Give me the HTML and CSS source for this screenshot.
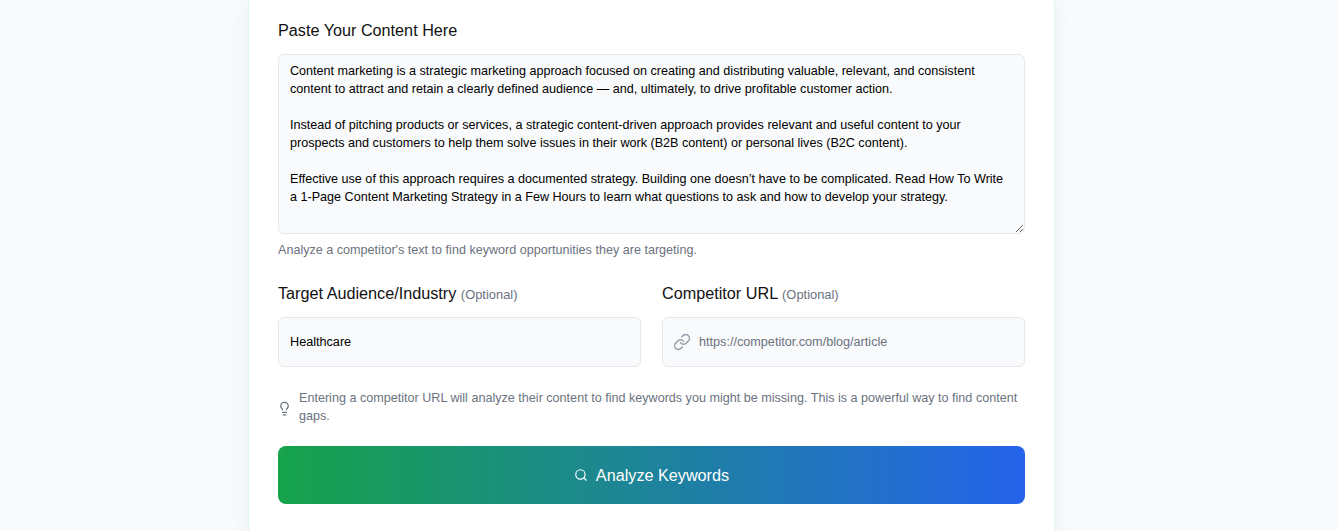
FILE: index.html
```html
<!DOCTYPE html>
<html lang="en">
  <head>
    <meta charset="UTF-8" />
    <meta name="viewport" content="width=device-width, initial-scale=1.0" />
    <title>Keyword Analyzer</title>
    <link rel="stylesheet" href="styles.css">
  </head>
  <body>
    <main class="card">
      <div class="field">
        <label class="label" for="content">Paste Your Content Here</label>
        <textarea id="content" class="textarea">Content marketing is a strategic marketing approach focused on creating and distributing valuable, relevant, and consistent content to attract and retain a clearly defined audience — and, ultimately, to drive profitable customer action.

Instead of pitching products or services, a strategic content-driven approach provides relevant and useful content to your prospects and customers to help them solve issues in their work (B2B content) or personal lives (B2C content).

Effective use of this approach requires a documented strategy. Building one doesn’t have to be complicated. Read How To Write a 1-Page Content Marketing Strategy in a Few Hours to learn what questions to ask and how to develop your strategy.</textarea>
        <p class="hint">Analyze a competitor's text to find keyword opportunities they are targeting.</p>
      </div>

      <div class="columns">
        <div>
          <label class="label" for="audience">Target Audience/Industry <span class="optional">(Optional)</span></label>
          <input id="audience" class="input" type="text" value="Healthcare" />
        </div>
        <div>
          <label class="label" for="url">Competitor URL <span class="optional">(Optional)</span></label>
          <div class="input-wrap">
            <!-- link icon -->
            <svg class="link-icon" viewBox="0 0 24 24" fill="none" stroke="currentColor" stroke-width="2" stroke-linecap="round" stroke-linejoin="round">
              <path d="M10 13a5 5 0 0 0 7.54.54l3-3a5 5 0 0 0-7.07-7.07l-1.72 1.71" />
              <path d="M14 11a5 5 0 0 0-7.54-.54l-3 3a5 5 0 0 0 7.07 7.07l1.71-1.71" />
            </svg>
            <input id="url" class="input with-icon" type="text" placeholder="https://competitor.com/blog/article" />
          </div>
        </div>
      </div>

      <div class="tip">
        <svg class="tip-icon" viewBox="0 0 24 24" fill="none" stroke="currentColor" stroke-width="2" stroke-linecap="round" stroke-linejoin="round">
          <path d="M15 14c.2-1 .7-1.7 1.5-2.5 1-.9 1.5-2.2 1.5-3.5A6 6 0 0 0 6 8c0 1 .2 2.2 1.5 3.5.7.7 1.3 1.5 1.5 2.5" />
          <path d="M9 18h6" />
          <path d="M10 22h4" />
        </svg>
        <p>Entering a competitor URL will analyze their content to find keywords you might be missing. This is a powerful way to find content gaps.</p>
      </div>

      <button class="btn" type="button">
        <svg class="btn-icon" viewBox="0 0 24 24" fill="none" stroke="currentColor" stroke-width="2" stroke-linecap="round" stroke-linejoin="round">
          <circle cx="11" cy="11" r="8" />
          <path d="m21 21-4.3-4.3" />
        </svg>
        Analyze Keywords
      </button>
    </main>
  </body>
</html>
```

FILE: styles.css
```css
:root {
  --border: #e5e7eb;
  --field: #f9fafb;
  --muted: #6b7280;
  --font: "Liberation Sans", Arial, sans-serif;
}

* {
  box-sizing: border-box;
}

html,
body {
  height: 100%;
  margin: 0;
  overflow: hidden;
  font-family: var(--font);
}

body {
  display: flex;
  justify-content: center;
  padding-right: 34px;
  background: #f8fafc;
}

.card {
  flex: none;
  width: 807px;
  height: 538px;
  padding: 21px 29px 0;
  background: #fff;
  border: 1px solid #dcfce7;
  border-top: none;
  border-radius: 0 0 12px 12px;
  box-shadow: 0 4px 20px rgba(0, 0, 0, 0.06);
}

.label {
  display: block;
  font-size: 16.22px;
  line-height: 18px;
  color: #111;
}

.optional {
  font-size: 12.9px;
  color: var(--muted);
}

.textarea {
  display: block;
  width: 100%;
  height: 180px;
  margin-top: 15px;
  padding: 7px 11px;
  font-family: var(--font);
  font-size: 12.6px;
  line-height: 18px;
  color: #000;
  background: var(--field);
  border: 1px solid var(--border);
  border-radius: 6px;
  resize: vertical;
}

.hint {
  margin: 8px 0 0;
  font-size: 12.6px;
  line-height: 16px;
  color: var(--muted);
}

.columns {
  display: grid;
  grid-template-columns: 1fr 1fr;
  gap: 21px;
  margin-top: 26px;
}

.columns .input,
.columns .input-wrap {
  margin-top: 13px;
}

.input {
  display: block;
  width: 100%;
  height: 50px;
  padding: 0 11px;
  font-family: var(--font);
  font-size: 12.65px;
  color: #000;
  background: var(--field);
  border: 1px solid var(--border);
  border-radius: 6px;
}

.input::placeholder {
  color: var(--muted);
  opacity: 1;
}

.input-wrap {
  position: relative;
}

.input-wrap .input {
  margin-top: 0;
}

.input.with-icon {
  padding-left: 36px;
}

.link-icon {
  position: absolute;
  left: 11px;
  top: 16px;
  width: 18px;
  height: 18px;
  color: #9ca3af;
}

.tip {
  display: flex;
  align-items: center;
  gap: 6px;
  margin-top: 22px;
  color: var(--muted);
}

.tip p {
  margin: 0;
  font-size: 12.6px;
  line-height: 18px;
}

.tip-icon {
  flex: none;
  width: 15px;
  height: 15px;
  margin: 3px 1px 0 -1px;
}

.btn {
  display: flex;
  align-items: center;
  justify-content: center;
  gap: 8px;
  width: 100%;
  height: 58px;
  margin-top: 21px;
  font-family: var(--font);
  font-size: 16.22px;
  color: #fff;
  background: linear-gradient(90deg, #16a34a, #2563eb);
  border: none;
  border-radius: 8px;
}

.btn-icon {
  width: 14px;
  height: 14px;
}
```
